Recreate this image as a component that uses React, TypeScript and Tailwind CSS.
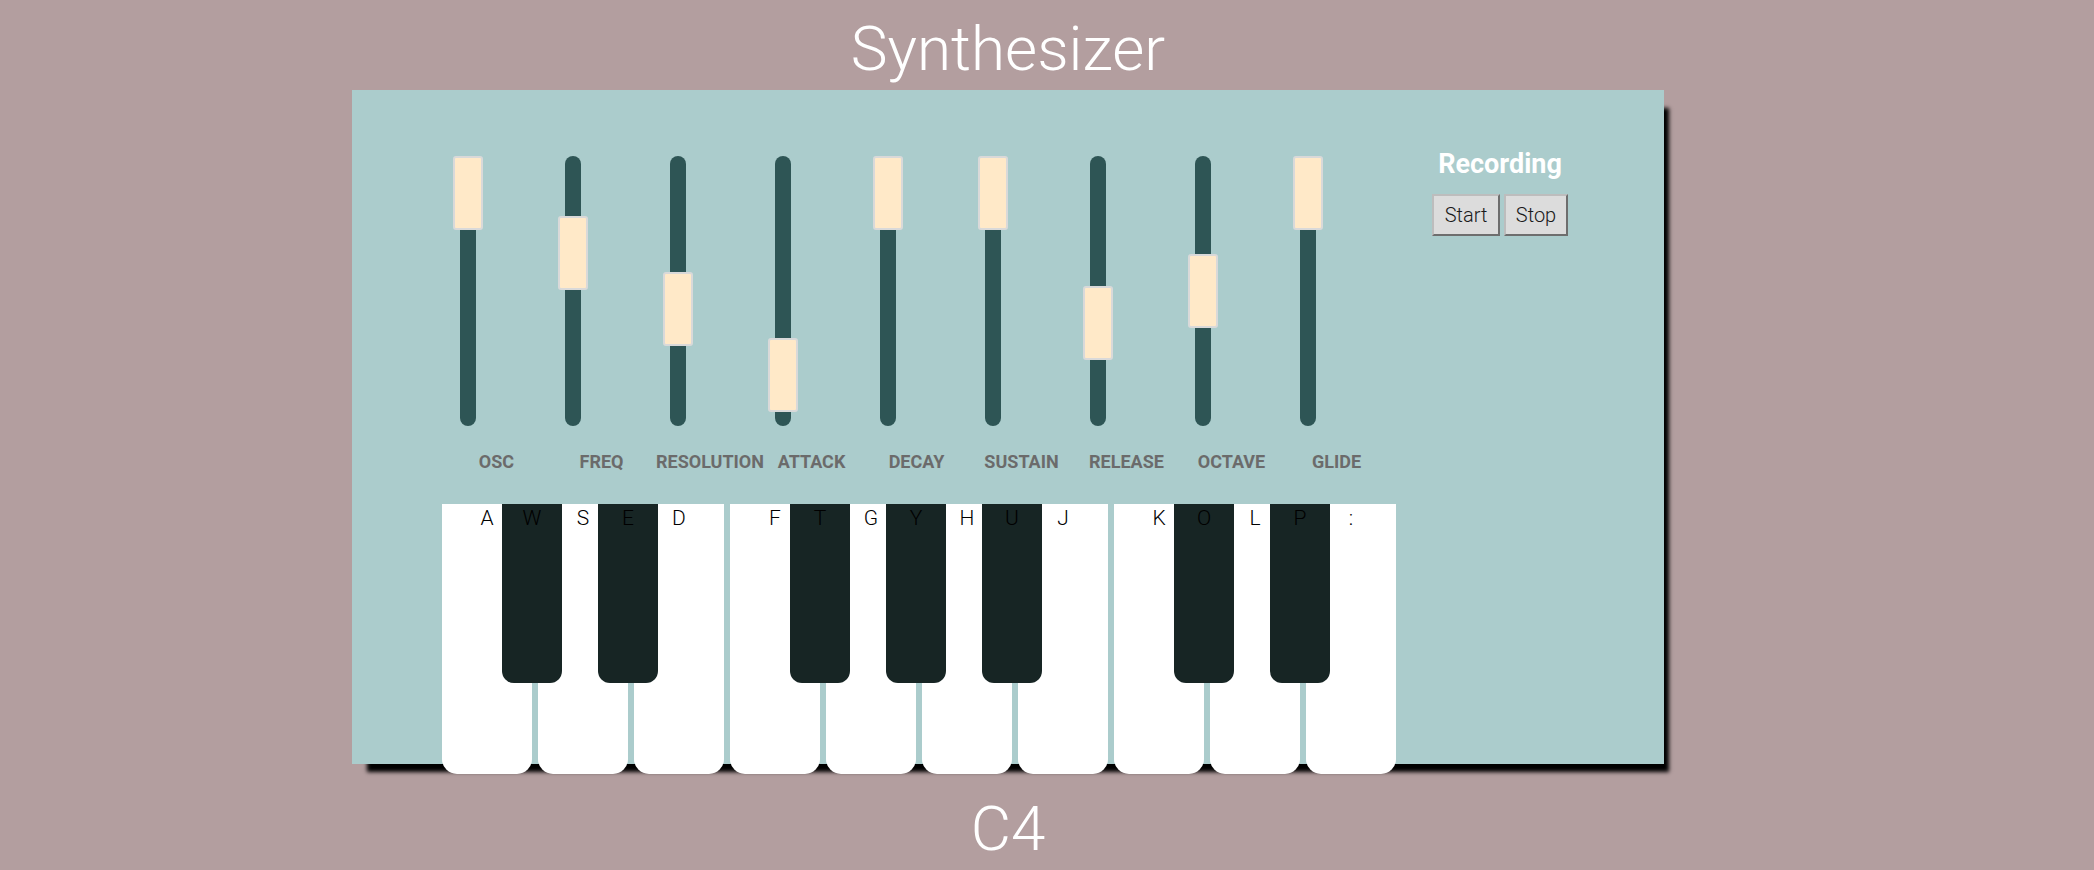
import React from "react";

type Slider = { name: string; offset: number };

const sliders: Slider[] = [
  { name: "OSC", offset: 0 },
  { name: "FREQ", offset: 60 },
  { name: "RESOLUTION", offset: 116 },
  { name: "ATTACK", offset: 182 },
  { name: "DECAY", offset: 0 },
  { name: "SUSTAIN", offset: 0 },
  { name: "RELEASE", offset: 130 },
  { name: "OCTAVE", offset: 98 },
  { name: "GLIDE", offset: 0 },
];

type Key = { white: string; black?: string };

const keys: Key[] = [
  { white: "A", black: "W" },
  { white: "S", black: "E" },
  { white: "D" },
  { white: "F", black: "T" },
  { white: "G", black: "Y" },
  { white: "H", black: "U" },
  { white: "J" },
  { white: "K", black: "O" },
  { white: "L", black: "P" },
  { white: ":" },
];

const SliderColumn = ({ slider }: { slider: Slider }) => (
  <div className="flex w-[105px] flex-col">
    <div className="relative ml-[18px] h-[270px] w-[16px] rounded-full bg-[#2e5555]">
      {/* thumb */}
      <div
        className="absolute left-[-7px] h-[74px] w-[30px] rounded-[3px] border-2 border-[#d9d9d9] bg-[#ffe9c8]"
        style={{ top: slider.offset }}
      />
    </div>
    <div className="mt-[27px] pl-[4px] text-center text-[18px] font-bold leading-none text-[#6b6b6b]">
      {slider.name}
    </div>
  </div>
);

const Keyboard = () => (
  <div className="mt-[33px] flex gap-[6px] font-['Roboto_Light','Roboto',sans-serif] font-light">
    {keys.map((k) => (
      <div
        key={k.white}
        className="relative h-[270px] w-[90px] rounded-b-[15px] bg-white pt-[4px] text-center text-[21px] leading-none text-black"
      >
        {k.white}
        {k.black && (
          <div className="absolute left-[60px] top-0 z-10 h-[179px] w-[60px] rounded-b-[12px] bg-[#172524] pt-[4px] text-center text-black">
            {k.black}
          </div>
        )}
      </div>
    ))}
  </div>
);

export default function App() {
  return (
    <div className="min-h-[870px] w-full bg-[#b39e9f] font-['Roboto',sans-serif]">
      <div className="ml-[352px] w-[1312px]">
        <h1 className="h-[90px] pt-[18px] text-center font-['Roboto_Light','Roboto',sans-serif] text-[62px] font-light leading-none text-white">
          Synthesizer
        </h1>

        <div className="flex h-[674px] bg-[#abcccc] pl-[90px] shadow-[10px_13px_4px_-5px_black]">
          <div className="w-[958px] pt-[66px]">
            <div className="flex">
              {sliders.map((s) => (
                <SliderColumn key={s.name} slider={s} />
              ))}
            </div>
            <Keyboard />
          </div>

          {/* Recording */}
          <div className="flex w-[200px] flex-col items-center pt-[61px]">
            <h2 className="text-[27px] font-bold leading-none text-white">Recording</h2>
            <div className="mt-[16px] flex gap-[4px] font-['Roboto_Light','Roboto',sans-serif] font-light">
              <button className="h-[42px] w-[68px] border-2 border-[#bdbdbd] border-b-[#6e6e6e] border-r-[#6e6e6e] bg-[#dcdcdc] text-[20px] text-[#1a1a1a]">
                Start
              </button>
              <button className="h-[42px] w-[64px] border-2 border-[#bdbdbd] border-b-[#6e6e6e] border-r-[#6e6e6e] bg-[#dcdcdc] text-[20px] text-[#1a1a1a]">
                Stop
              </button>
            </div>
          </div>
        </div>

        <div className="mt-[34px] text-center font-['Roboto_Light','Roboto',sans-serif] text-[62px] font-light leading-none text-white">
          C4
        </div>
      </div>
    </div>
  );
}
